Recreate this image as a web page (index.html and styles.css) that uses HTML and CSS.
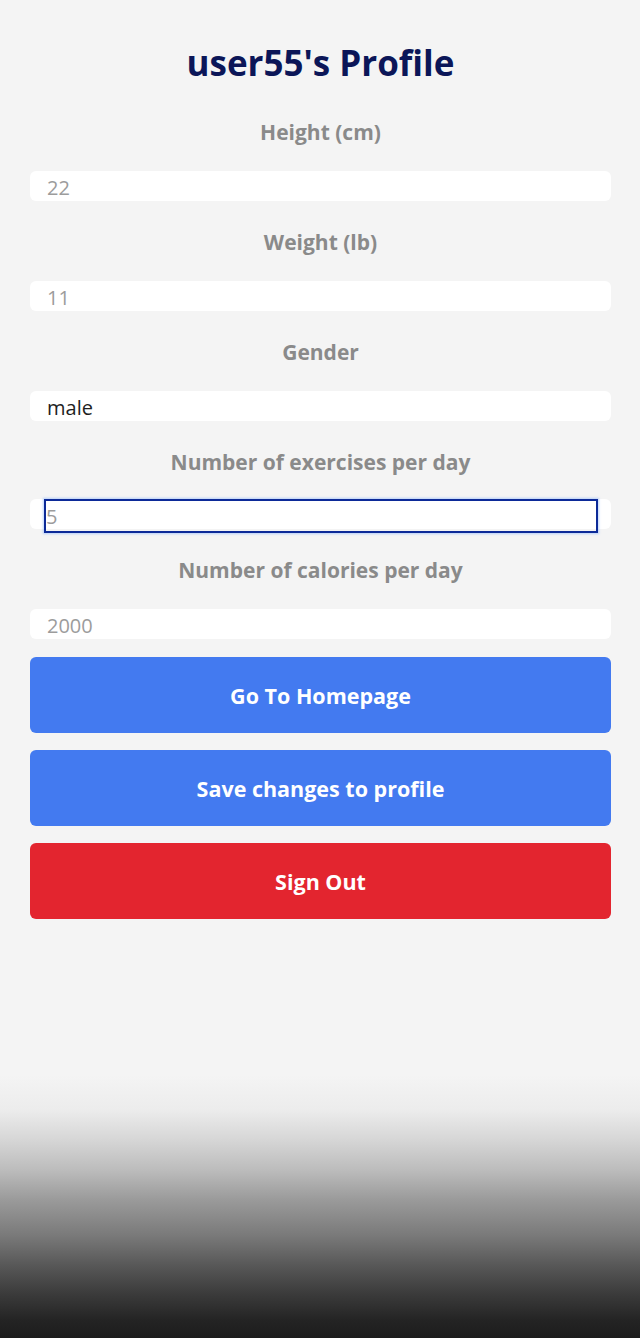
FILE: index.html
```html
<!DOCTYPE html>
<html>
<head>
<meta charset="utf-8">
<link rel="stylesheet" href="styles.css">
</head>
<body>
<div class="page">
  <h1 class="title">user55's Profile</h1>
  <div class="field">
    <div class="label">Height (cm)</div>
    <div class="input placeholder">22</div>
  </div>
  <div class="field">
    <div class="label">Weight (lb)</div>
    <div class="input placeholder">11</div>
  </div>
  <div class="field">
    <div class="label">Gender</div>
    <div class="input value">male</div>
  </div>
  <div class="field">
    <div class="label">Number of exercises per day</div>
    <div class="input input-wrap"><div class="focus placeholder">5</div></div>
  </div>
  <div class="field last">
    <div class="label">Number of calories per day</div>
    <div class="input placeholder">2000</div>
  </div>
  <div class="buttons">
    <div class="btn btn-blue">Go To Homepage</div>
    <div class="btn btn-blue">Save changes to profile</div>
    <div class="btn btn-red">Sign Out</div>
  </div>
</div>
</body>
</html>
```
FILE: styles.css
```css
html {
  height: 1338px;
  background: linear-gradient(to bottom,
    #f4f4f4 0px,
    #f4f4f4 1075px,
    #ececec 1110px,
    #d6d6d6 1140px,
    #bcbcbc 1170px,
    #9a9a9a 1200px,
    #7a7a7a 1235px,
    #585858 1265px,
    #3a3a3a 1295px,
    #242424 1320px,
    #1c1c1c 1338px);
}
body {
  margin: 0;
  font-family: "Open Sans", "Noto Sans", sans-serif;
}
.page {
  padding: 38px 29px 0 30px;
}
.title {
  margin: 0 0 32px;
  text-align: center;
  font-size: 35px;
  line-height: 50px;
  font-weight: 700;
  color: #0b1658;
}
.field {
  margin-bottom: 29px;
}
.field.last {
  margin-bottom: 18px;
}
.label {
  text-align: center;
  font-size: 21px;
  line-height: 24px;
  font-weight: 700;
  color: #8a8a8a;
  margin-bottom: 27px;
}
.input {
  height: 30px;
  background: #ffffff;
  border-radius: 6px;
  padding-left: 17px;
  font-size: 20px;
  line-height: 33px;
  box-sizing: border-box;
}
.placeholder {
  color: #9c9c9c;
}
.value {
  color: #1e1e1e;
}
.input-wrap {
  padding: 0 13px 0 14px;
}
.focus {
  height: 34px;
  margin-top: -2px;
  border: 2px solid #0c2a98;
  box-sizing: border-box;
  line-height: 32px;
  box-shadow: 0 0 2px 1px rgba(120, 170, 255, 0.5);
  padding-left: 0;
}
.buttons {
  display: flex;
  flex-direction: column;
  gap: 17px;
}
.btn {
  height: 76px;
  border-radius: 6px;
  display: flex;
  align-items: center;
  justify-content: center;
  color: #ffffff;
  font-size: 21.5px;
  font-weight: 700;
}
.btn-blue {
  background: #437af0;
}
.btn-red {
  background: #e3252f;
}
```
